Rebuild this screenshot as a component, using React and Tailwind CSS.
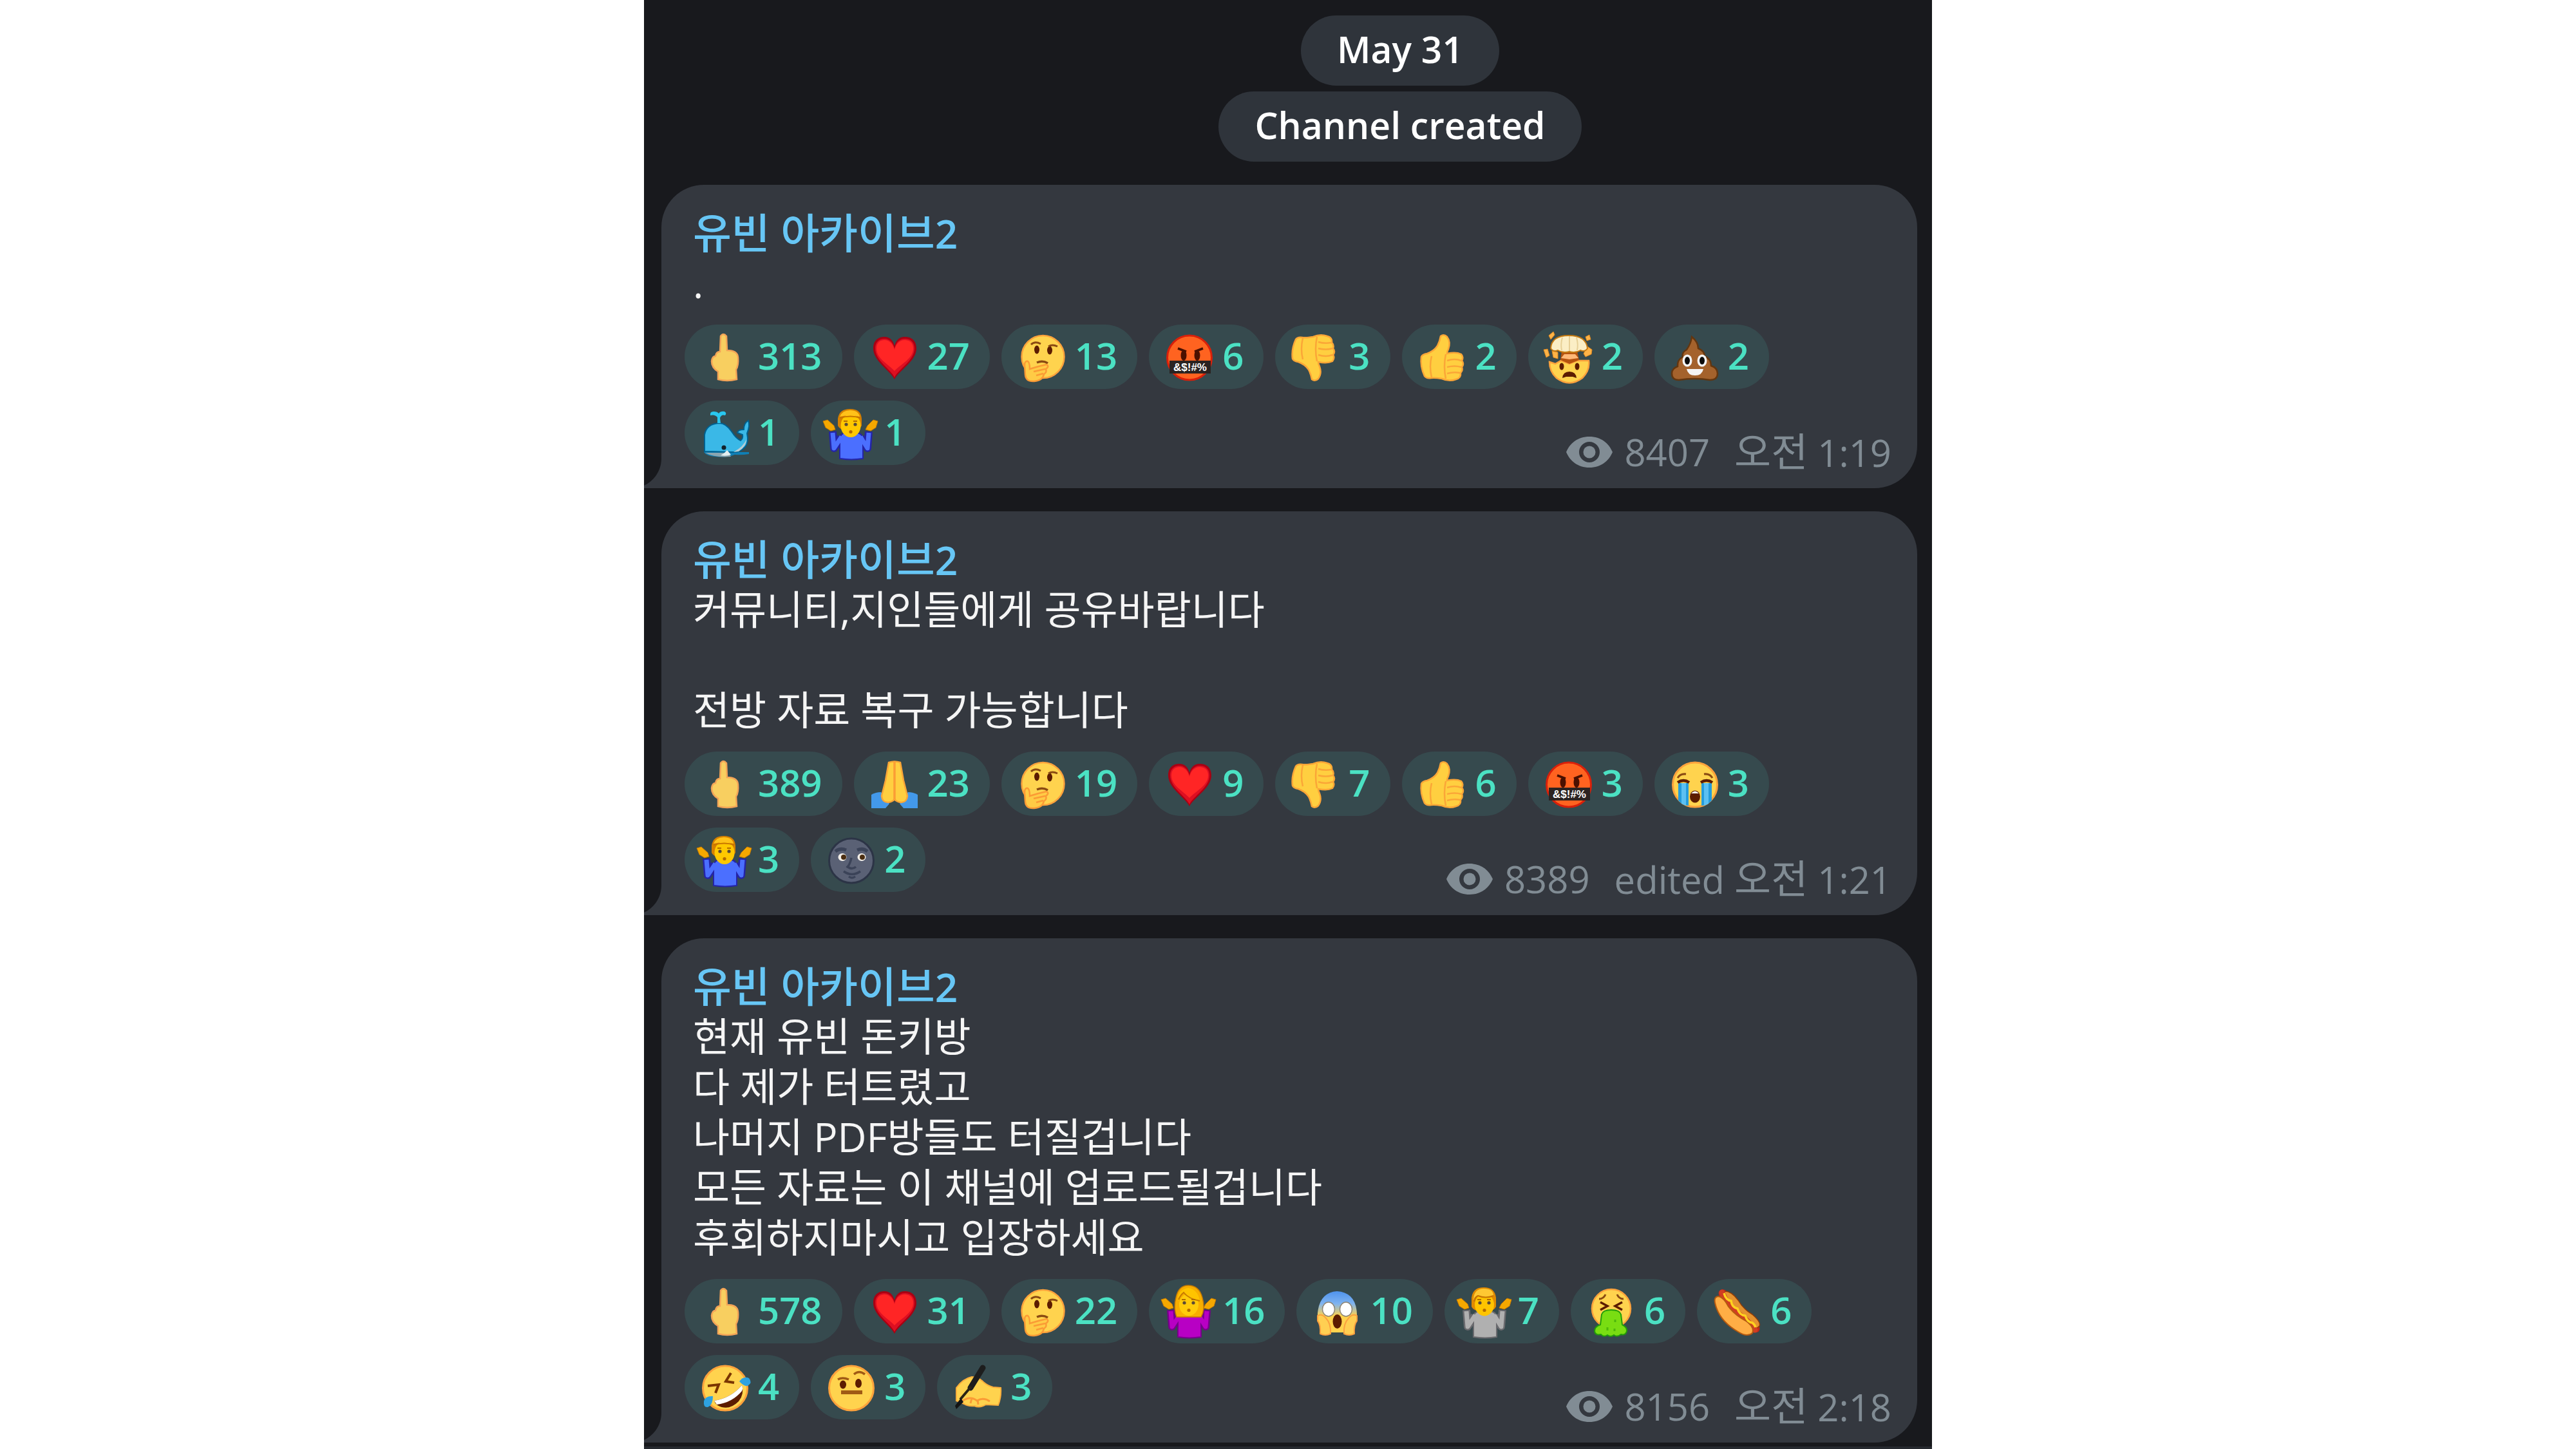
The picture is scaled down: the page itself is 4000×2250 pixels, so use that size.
function Face({ fill = '#ffd34e', edge = '#fda23c' }) {
    return <circle cx="45" cy="46.5" r="34.5" fill={fill} stroke={edge} strokeWidth="3" />;
}

function Shrug({ shirt, trim, children }) {
    return (
        <>
            <g fill="#f5a800" stroke="#c77a00" strokeWidth="1">
                <path d="M1 27 L8 25 L18 34 L20 40 L13 42 L5 37 Z" />
                <path d="M86 27 L79 25 L70 34 L67 40 L75 42 L83 37 Z" />
            </g>
            <path d="M16 43 L18 69 L29 52 M72 43 L70 69 L60 52" fill="none" stroke={trim} strokeWidth="12" strokeLinejoin="round" />
            <path d="M27 85 V56 Q27 46 36 45 H53 Q63 46 63 56 V85 Q45 88 27 85 Z" fill={shirt} stroke={trim} strokeWidth="2" />
            <path d="M16 45 L18 69 L30 51 M72 45 L70 69 L59 51" fill="none" stroke={shirt} strokeWidth="7" strokeLinejoin="round" />
            {children}
            <circle cx="37" cy="32" r="2.6" fill="#5b4a36" />
            <circle cx="51" cy="32" r="2.6" fill="#5b4a36" />
            <path d="M33 27 H39 M48 27 H54" stroke="#b36b00" strokeWidth="2" />
            <circle cx="44" cy="43.5" r="2.6" fill="#b36b00" />
        </>
    );
}

function Thumb() {
    return (
        <>
            <path
                d="M12 45 Q14 41 21 40 Q32 36 37 28 Q41 20 42 13 Q47 9 52 14 Q58 22 54 33 Q52 37 52 40 Q66 37 74 41 Q78 46 75 51 Q79 56 75 61 Q77 66 73 70 Q74 78 66 80 Q55 84 44 79 Q32 77 27 78 Q20 79 17 75 Q10 60 12 45 Z"
                fill="#ffcf40" stroke="#fba637" strokeWidth="2.5"
            />
            <path d="M50 41 Q46 60 50 79 M52 51 Q64 47 74 51 M52 61 Q64 58 74 61 M52 71 Q62 68 72 70 M28 44 Q24 60 28 77" fill="none" stroke="#fba637" strokeWidth="2.5" />
        </>
    );
}

const art = {
    finger: (
        <path
            d="M37 37 L38 13 Q42 7 47 13 L48 35 Q64 35 65 46 Q66 58 62 65 L63 80 Q48 84 34 80 L34 68 Q24 62 24 52 Q25 44 30 44 Q31 37 37 37 Z"
            fill="#f8cf60" stroke="#f3a457" strokeWidth="2.5"
        />
    ),
    heart: (
        <>
            <path d="M45 80 C38 66 12 52 12 32 C12 18 22 14 29 14 C38 14 43 20 45 28 C47 20 52 14 61 14 C69 14 79 18 79 32 C79 52 52 66 45 80 Z" fill="#a90012" />
            <path d="M45 77 C39 64 15 51 15 32 C15 20 24 17 29 17 C38 17 43 24 45 32 C47 24 52 17 61 17 C67 17 76 20 76 32 C76 51 51 64 45 77 Z" fill="#dd0f22" />
            <path d="M45 67 C35 56 17 48 17 32 C17 22 24 19 29 19 C38 19 43 26 45 34 C47 26 52 19 61 19 C67 19 74 22 74 32 C74 48 55 56 45 67 Z" fill="#ff2525" />
        </>
    ),
    thinking: (
        <>
            <circle cx="46.5" cy="45" r="33" fill="#ffd34e" stroke="#fda23c" strokeWidth="2.5" />
            <ellipse cx="37" cy="34" rx="4" ry="6.5" fill="#5c1c00" />
            <ellipse cx="57" cy="35" rx="4" ry="6.5" fill="#5c1c00" />
            <path d="M28 26 Q34 20 43 25 M55 29 Q61 25 69 29" fill="none" stroke="#8a4a12" strokeWidth="3" />
            <path d="M37 54 Q46 50 54 55" fill="none" stroke="#8a4a12" strokeWidth="3.5" />
            <path d="M18 58 Q18 51 23 52 Q26 54 26 64 Q38 60 52 57 Q57 60 51 64 Q53 69 48 72 Q46 82 33 83 Q20 84 19 73 Z" fill="#ffcb45" stroke="#fb9b35" strokeWidth="2.5" />
            <path d="M32 68 L50 64 M36 74 L47 71" stroke="#fb9b35" strokeWidth="2.5" />
        </>
    ),
    swearing: (
        <>
            <Face fill="#ff6320" edge="#d8200a" />
            <path d="M27 32 L40 37 M66 32 L53 37" stroke="#4a1000" strokeWidth="3.5" />
            <ellipse cx="36" cy="43" rx="4.5" ry="8" fill="#4a1000" />
            <ellipse cx="57" cy="43" rx="4.5" ry="8" fill="#4a1000" />
            <path d="M14 51 H78 V71 H14 Z" fill="#2b2321" />
            <text x="46" y="67" textAnchor="middle" fontSize="17" fontWeight="700" fill="#ffffff" fontFamily="Liberation Sans, sans-serif">&amp;$!#%</text>
        </>
    ),
    thumbsDown: <g transform="matrix(1 0 0 -1 -3 93)"><Thumb /></g>,
    thumbsUp: <Thumb />,
    mindBlown: (
        <>
            <g fill="#ffb347" stroke="#e08a20" strokeWidth="1">
                <path d="M14 12 L21 6 L23 11 L17 18 Z" />
                <path d="M71 14 L77 11 L79 18 L73 20 Z" />
                <path d="M6 34 L12 33 L15 43 L10 46 Z" />
                <path d="M19 36 L28 38 L28 48 L21 46 Z" />
                <path d="M68 40 L74 29 L81 34 L80 41 L71 45 Z" />
            </g>
            <path d="M15 53 L24 56 L33 51 L46 56 L58 51 L76 51 Q78 66 66 78 Q46 93 26 78 Q15 68 15 53 Z" fill="#ffd34e" stroke="#fda23c" strokeWidth="2.5" />
            <path d="M34 36 H58 L61 50 L46 56 L32 50 Z" fill="#b5530f" />
            <path d="M33 47 L38 41 H55 L60 47 L46 49 Z" fill="#ffb877" />
            <path d="M17 32 Q18 12 45 12 Q72 12 74 32 Q70 38 63 35 Q55 40 46 37 Q36 40 28 35 Q21 38 17 32 Z" fill="#fbeec5" stroke="#c57a12" strokeWidth="2" />
            <path d="M35 15 Q32 26 34 35 M46 13 V36 M57 15 Q60 26 58 35" fill="none" stroke="#e6cf96" strokeWidth="2" />
            <ellipse cx="34" cy="60" rx="3.5" ry="5.5" fill="#5c1c00" />
            <ellipse cx="58" cy="60" rx="3.5" ry="5.5" fill="#5c1c00" />
            <path d="M35 78 Q36 68 46 68 Q56 68 57 78 L51 76 H41 Z" fill="#5c1c00" />
        </>
    ),
    poop: (
        <>
            <path
                d="M40 14 Q50 22 50 32 Q60 36 60 44 Q70 48 70 59 Q80 62 80 71 Q80 81 68 81 Q45 77 20 81 Q9 81 9 71 Q9 63 18 60 Q17 50 26 45 Q24 38 32 34 Q39 24 40 14 Z"
                fill="#a4622c" stroke="#63360f" strokeWidth="2.5"
            />
            <ellipse cx="33" cy="51" rx="7.5" ry="9.5" fill="#f4f4f4" />
            <ellipse cx="56" cy="51" rx="7.5" ry="9.5" fill="#f4f4f4" />
            <ellipse cx="33" cy="51" rx="4" ry="6" fill="#0c0c0c" />
            <ellipse cx="56" cy="51" rx="4" ry="6" fill="#0c0c0c" />
            <path d="M32 64 H58 Q56 74 45 74 Q34 74 32 64 Z" fill="#f4f4f4" />
        </>
    ),
    whale: (
        <>
            <path d="M12 75 H82 V78 Q70 80 60 79 Q48 84 30 82 Q16 81 12 75 Z" fill="#0f7fb5" />
            <path d="M14 76 H50 L54 82 Q28 84 14 76 Z" fill="#8ba5b0" />
            <path d="M13 74 V48 Q16 31 36 30 Q46 30 55 43 Q62 54 69 57 Q73 54 72 48 L64 45 Q65 40 74 40 Q74 30 81 26 Q84 34 79 46 Q82 60 76 67 Q68 76 56 75 Z" fill="#3ab8e7" stroke="#00608f" strokeWidth="2" />
            <path d="M78 55 Q78 66 66 74 L58 75 Q74 66 78 55 Z" fill="#b7ccd3" />
            <path d="M43 77 L48 72 L54 79 Q46 82 38 80 Z" fill="#e3eef0" />
            <path d="M33 30 V21 Q29 16 22 18 Q21 12 27 12 Q33 12 35 15 Q38 11 44 12 Q48 14 45 18 Q39 16 37 22 L38 30 Z" fill="#29c7ef" />
            <circle cx="43" cy="68" r="3.5" fill="#12222c" />
        </>
    ),
    shrugMan: (
        <Shrug shirt="#4b6fff" trim="#2424a8">
            <path d="M24 34 V23 Q26 8 43 8 Q60 8 61 23 V34 Q58 42 44 42 Q28 42 24 34 Z" fill="#d68000" />
            <ellipse cx="44" cy="34" rx="15.5" ry="18" fill="#ffc800" />
            <path d="M27 20 Q31 10 43 10 Q56 10 58 20 Q44 16 27 20 Z" fill="#ffc21a" />
            <path d="M27 22 Q44 17 59 22" fill="none" stroke="#c77400" strokeWidth="2" />
        </Shrug>
    ),
    shrugWoman: (
        <Shrug shirt="#b800c4" trim="#76008a">
            <path d="M25 54 Q20 40 24 24 Q28 5 43 5 Q60 5 65 24 Q70 42 63 54 Z" fill="#f7ae00" stroke="#c77a00" strokeWidth="1.5" />
            <ellipse cx="44" cy="35" rx="15" ry="17" fill="#ffcb0a" />
            <path d="M28 30 Q29 18 36 16 Q44 26 61 29 Q58 11 43 9 Q28 11 27 27 Z" fill="#ffc400" />
            <path d="M28 27 Q31 20 36 16 Q44 26 61 29" fill="none" stroke="#c77a00" strokeWidth="2" />
        </Shrug>
    ),
    shrugPerson: (
        <Shrug shirt="#b0b0b0" trim="#6a6a6e">
            <path d="M24 38 V24 Q26 8 43 8 Q60 8 62 24 V38 Q58 46 44 46 Q28 46 24 38 Z" fill="#e08a00" />
            <ellipse cx="44" cy="35" rx="15" ry="17.5" fill="#ffc400" />
            <path d="M27 32 Q27 24 33 21 Q46 24 58 21 Q58 10 43 10 Q28 10 27 26 Z" fill="#ffc832" />
            <path d="M28 30 Q29 23 34 21 Q46 26 58 21" fill="none" stroke="#c77400" strokeWidth="2" />
        </Shrug>
    ),
    pray: (
        <>
            <path d="M9 62 Q16 58 24 58 L37 76 L31 83 H9 Z" fill="#4399ea" />
            <path d="M81 62 Q74 58 66 58 L53 76 L59 83 H81 Z" fill="#4399ea" />
            <path d="M36 12 Q45 9 54 12 L59 40 L65 64 Q64 74 55 74 Q48 73 45 69 Q42 73 35 74 Q26 74 25 64 L31 40 Z" fill="#ffcf40" stroke="#fba637" strokeWidth="2.5" />
            <path d="M45 11 V70" stroke="#fb9d35" strokeWidth="3.5" />
        </>
    ),
    cry: (
        <>
            <Face />
            <path d="M19 44 H35 V79 Q26 79 19 71 Z" fill="#249cdc" />
            <path d="M24 44 H31 V79 L24 76 Z" fill="#5cc0f2" />
            <path d="M71 44 H55 V79 Q64 79 71 71 Z" fill="#249cdc" />
            <path d="M66 44 H59 V79 L66 76 Z" fill="#5cc0f2" />
            <path d="M18 43 Q27 37 36 43 M54 43 Q63 37 72 43" fill="none" stroke="#5c1c00" strokeWidth="4.5" />
            <path d="M18 36 Q22 29 31 30 M72 36 Q68 29 59 30" fill="none" stroke="#8a4a12" strokeWidth="3" />
            <ellipse cx="45" cy="65" rx="8" ry="9.5" fill="#5c1c00" />
            <path d="M39 60 Q45 53 51 60 Z" fill="#ffffff" />
        </>
    ),
    moon: (
        <>
            <Face fill="#5a6175" edge="#2c3446" />
            <path d="M20 32 Q28 26 37 30 M54 30 Q63 26 70 32" fill="none" stroke="#3b4358" strokeWidth="5" />
            <ellipse cx="31" cy="41" rx="6.5" ry="6" fill="#f2eee8" />
            <ellipse cx="61" cy="41" rx="6.5" ry="6" fill="#f2eee8" />
            <circle cx="33" cy="41" r="4" fill="#4a2d10" />
            <circle cx="62" cy="41" r="4" fill="#4a2d10" />
            <path d="M45 42 Q43 52 39 56 Q46 61 52 56 M33 63 Q46 72 59 63 M41 71 Q46 75 51 71" fill="none" stroke="#3b4358" strokeWidth="3.5" />
        </>
    ),
    scream: (
        <>
            <defs>
                <linearGradient id="fear" x1="0" y1="0" x2="0" y2="1">
                    <stop offset="0" stopColor="#4f93ec" />
                    <stop offset="0.3" stopColor="#7fb3f0" />
                    <stop offset="0.6" stopColor="#ffd34e" />
                </linearGradient>
            </defs>
            <path d="M45 14 Q75 16 76 50 Q75 68 66 78 H24 Q14 66 15 48 Q18 16 45 14 Z" fill="url(#fear)" />
            <ellipse cx="32" cy="42" rx="9.5" ry="11" fill="#ffffff" stroke="#8d8474" strokeWidth="1.5" />
            <ellipse cx="59" cy="42" rx="9.5" ry="11" fill="#ffffff" stroke="#8d8474" strokeWidth="1.5" />
            <ellipse cx="45.5" cy="61" rx="7" ry="11" fill="#5c1c00" />
            <path d="M15 52 Q22 48 28 56 Q36 64 35 80 Q27 84 19 80 Q20 66 15 60 Z" fill="#ffcf52" stroke="#fba140" strokeWidth="2" />
            <path d="M76 52 Q69 48 63 56 Q55 64 56 80 Q64 84 72 80 Q71 66 76 60 Z" fill="#ffcf52" stroke="#fba140" strokeWidth="2" />
        </>
    ),
    vomit: (
        <>
            <circle cx="45" cy="41" r="30" fill="#ffd34e" stroke="#fda23c" strokeWidth="2.5" />
            <path d="M26 26 Q33 26 36 19 M64 26 Q57 26 54 19" fill="none" stroke="#8a4a12" strokeWidth="3" />
            <path d="M28 31 L39 37 L28 43 M62 31 L51 37 L62 43" fill="none" stroke="#5c1c00" strokeWidth="3.5" />
            <path d="M30 50 Q32 43 45 43 Q58 43 60 50 L62 66 Q70 70 69 76 Q67 83 60 81 Q54 86 49 82 Q44 86 39 82 Q33 86 29 81 Q20 83 19 76 Q19 69 28 66 Z" fill="#79dd12" stroke="#229c0a" strokeWidth="2" />
            <path d="M39 70 V75 M51 58 V62 M50 72 V76" stroke="#4fb80b" strokeWidth="3" />
        </>
    ),
    hotdog: (
        <>
            <path d="M16 20 Q14 12 22 11 Q29 12 34 22 L48 38 Q66 50 78 66 Q82 76 75 78 L66 76 Z" fill="#c3261a" />
            <path d="M25 14 Q36 14 46 28 Q54 42 68 50 Q82 62 79 68 L70 76 Q40 50 23 20 Z" fill="#e5932f" stroke="#8f3b08" strokeWidth="1.5" />
            <path d="M21 16 Q28 34 42 46 Q60 58 72 74" fill="none" stroke="#d13d22" strokeWidth="9" strokeLinecap="round" />
            <path d="M10 32 Q8 22 16 22 Q24 24 31 38 Q42 52 58 60 Q72 70 68 79 Q60 86 46 77 Q16 60 10 32 Z" fill="#ffae45" stroke="#b55a10" strokeWidth="2" />
            <path d="M24 17 Q27 28 35 29 Q36 39 45 41 Q48 51 57 52 Q60 62 68 63 Q72 66 73 70" fill="none" stroke="#ffd21f" strokeWidth="3.5" />
        </>
    ),
    rofl: (
        <>
            <Face />
            <path d="M18 43 L35 41 L30 54 M54 23 L46 36 L59 38" fill="none" stroke="#7a3500" strokeWidth="4" />
            <path d="M28 66 Q54 62 71 42 Q75 56 66 67 Q50 83 33 73 Q29 70 28 66 Z" fill="#5c1c00" />
            <path d="M28 66 Q54 62 71 42 Q73 47 71 51 Q56 69 32 72 Z" fill="#ffffff" />
            <path d="M67 36 Q74 27 82 31 Q88 38 80 43 Q74 44 67 36 Z" fill="#2ea2e0" />
            <path d="M26 59 Q14 58 12 67 Q11 77 18 76 Q26 73 26 59 Z" fill="#2ea2e0" />
        </>
    ),
    raisedBrow: (
        <>
            <Face />
            <ellipse cx="32" cy="41" rx="5" ry="6.5" fill="#5c1c00" />
            <ellipse cx="56" cy="39" rx="5" ry="7" fill="#5c1c00" />
            <path d="M24 33 Q31 29 41 33 M49 25 Q57 18 66 25" fill="none" stroke="#a05a14" strokeWidth="3.5" />
            <path d="M29 53 H62" stroke="#a05a14" strokeWidth="6" />
        </>
    ),
    writing: (
        <>
            <path d="M12 46 Q22 32 36 29 Q46 29 54 37 Q61 43 69 45 L81 46 Q82 60 77 73 L58 72 Q48 78 40 74 Q30 75 24 71 L12 66 Z" fill="#ffd34e" stroke="#fdae3c" strokeWidth="2" />
            <path d="M22 66 Q34 58 44 66 Q54 60 64 67 M34 70 L36 62 M46 72 L45 64" fill="none" stroke="#fb9b35" strokeWidth="3" />
            <path d="M53 15 L34 46" stroke="#1d1d1d" strokeWidth="9" strokeLinecap="round" />
            <path d="M35 44 L18 64" stroke="#2b2415" strokeWidth="4" />
            <path d="M19 62 L23 68 L12 79 L10 74 Z" fill="#141414" />
        </>
    ),
};

const messages = [
    {
        lines: ['.'],
        reactions: [
            ['finger', 313], ['heart', 27], ['thinking', 13], ['swearing', 6], ['thumbsDown', 3],
            ['thumbsUp', 2], ['mindBlown', 2], ['poop', 2], ['whale', 1], ['shrugMan', 1],
        ],
        views: '8407',
        time: '1:19',
    },
    {
        lines: ['커뮤니티,지인들에게 공유바랍니다', '', '전방 자료 복구 가능합니다'],
        reactions: [
            ['finger', 389], ['pray', 23], ['thinking', 19], ['heart', 9], ['thumbsDown', 7],
            ['thumbsUp', 6], ['swearing', 3], ['cry', 3], ['shrugMan', 3], ['moon', 2],
        ],
        views: '8389',
        edited: true,
        time: '1:21',
    },
    {
        lines: [
            '현재 유빈 돈키방',
            '다 제가 터트렸고',
            '나머지 PDF방들도 터질겁니다',
            '모든 자료는 이 채널에 업로드될겁니다',
            '후회하지마시고 입장하세요',
        ],
        reactions: [
            ['finger', 578], ['heart', 31], ['thinking', 22], ['shrugWoman', 16], ['scream', 10],
            ['shrugPerson', 7], ['vomit', 6], ['hotdog', 6], ['rofl', 4], ['raisedBrow', 3], ['writing', 3],
        ],
        views: '8156',
        time: '2:18',
    },
];

function ServicePill({ children }) {
    return (
        <div className="rounded-full bg-[#2f343b] px-14 pb-1 text-[57px] leading-[105px] font-semibold text-white">
            {children}
        </div>
    );
}

function Reaction({ name, count }) {
    return (
        <button type="button" aria-label={`${name} ${count}`} className="flex h-[100px] items-center gap-[6px] rounded-full bg-[#364a4e] pr-[31px] pl-[18px] text-[58px] leading-none font-semibold text-[#4be1c3]">
            <svg viewBox="0 0 90 90" className="size-[90px] shrink-0">{art[name]}</svg>
            <span className="pb-1">{count}</span>
        </button>
    );
}

function Eye() {
    return (
        <svg viewBox="0 0 72 48" className="mr-[18px] h-[48px] w-[72px]" fill="#818c94">
            <path fillRule="evenodd" d="M36 0 C54 0 66 10 72 24 C66 38 54 48 36 48 C18 48 6 38 0 24 C6 10 18 0 36 0 Z M36 8 A16 16 0 1 0 36 40 A16 16 0 1 0 36 8 Z" />
            <circle cx="36" cy="24" r="9.5" />
        </svg>
    );
}

function Message({ lines, reactions, views, edited, time }) {
    return (
        <article className="relative rounded-[66px] rounded-bl-none bg-[#34383f] pt-9 pr-10 pb-9 pl-9">
            {/* tail */}
            <svg viewBox="0 0 28 46" className="absolute bottom-0 -left-[27px] h-[46px] w-[28px]" fill="#34383f">
                <path d="M28 0 V46 H0 V42 C16 35 27 18 27 0 Z" />
            </svg>

            <div className="mb-[26px] pl-[13px]">
                <h2 className="text-[65px] leading-[76px] font-medium text-[#67c6f5]">
                    유빈 아카이브<span className="text-[62px] font-semibold">2</span>
                </h2>
                {lines.map((line, i) => (
                    <p key={i} className="h-[78px] text-[62px] leading-[78px] text-[#f5f5f5]">{line}</p>
                ))}
            </div>

            <div className="flex flex-wrap gap-[18px]">
                {reactions.map(([name, count]) => (
                    <Reaction key={name} name={name} count={count} />
                ))}
                <div className="-mb-[20px] ml-auto flex items-center self-end text-[58px] leading-[78px] text-[#818c94]">
                    <Eye />
                    <span className="mr-[38px]">{views}</span>
                    <span>{edited && 'edited '}<span className="text-[62px]">오전</span> {time}</span>
                </div>
            </div>
        </article>
    );
}

export default function App() {
    return (
        <div className="min-h-screen bg-white">
            <main className="mx-auto flex min-h-screen w-1/2 flex-col bg-[#18191d] font-['Open_Sans','Noto_Sans_CJK_KR',sans-serif]">
                <div className="flex flex-col items-center gap-[9px] pt-6 pb-9 pl-[348px]">
                    <ServicePill>May 31</ServicePill>
                    <ServicePill>Channel created</ServicePill>
                </div>
                <div className="flex flex-col gap-9 pr-[23px] pl-[27px]">
                    {messages.map((message) => (
                        <Message key={message.views} {...message} />
                    ))}
                </div>
                <div className="mt-auto h-1 bg-[#26292f]" />
            </main>
        </div>
    );
}
